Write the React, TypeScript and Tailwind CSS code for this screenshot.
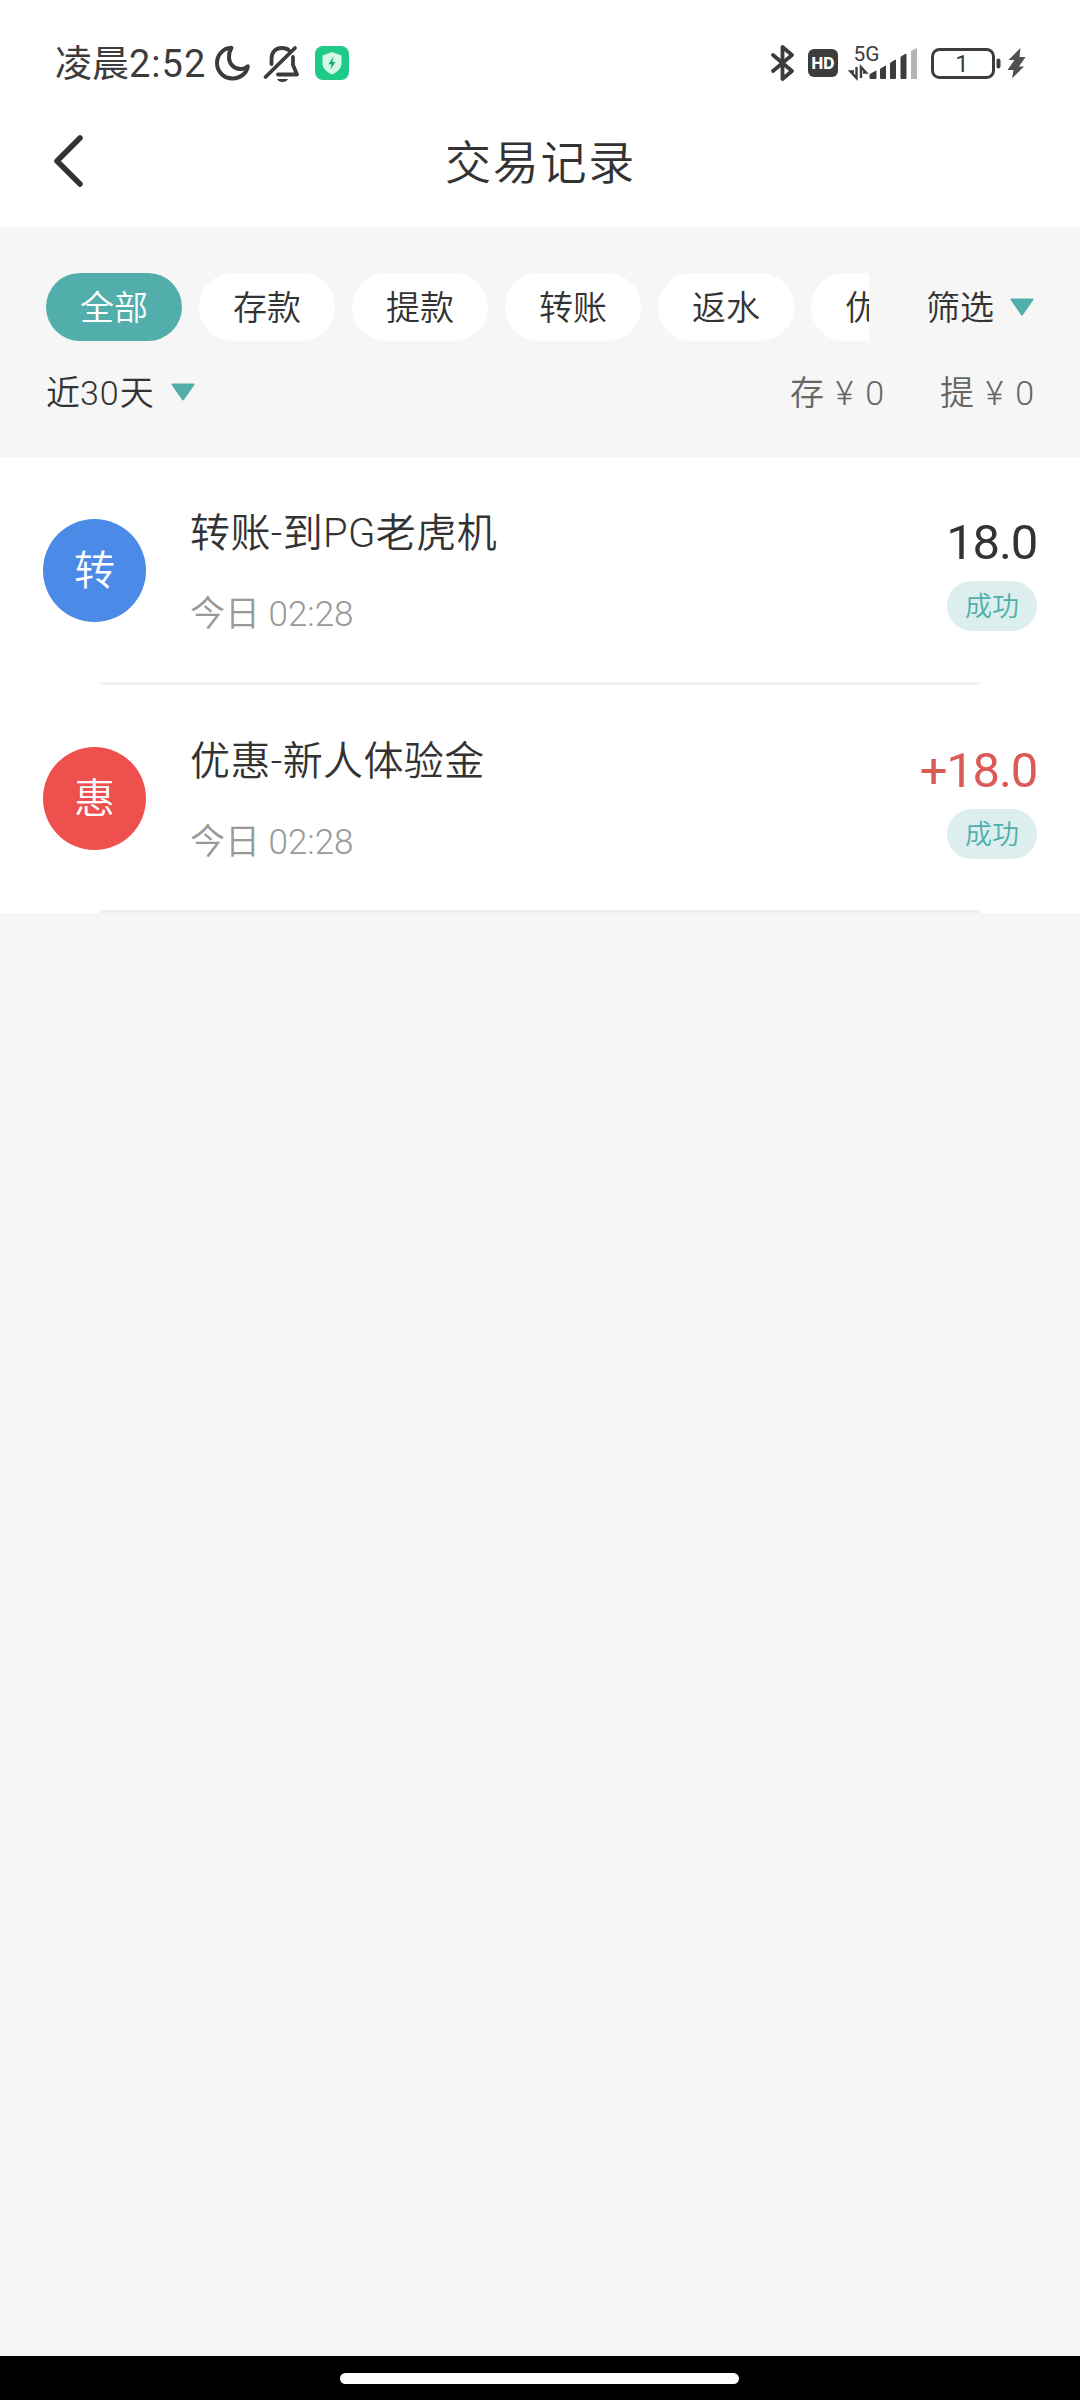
import type { ReactNode } from "react";

const tabs = ["全部", "存款", "提款", "转账", "返水", "优惠"];

const records = [
    {
        id: 1,
        icon: "转",
        iconClass: "bg-[#4b8ae6]",
        title: "转账-到PG老虎机",
        time: "今日 02:28",
        amount: "18.0",
        amountClass: "text-[#333333]",
        status: "成功",
    },
    {
        id: 2,
        icon: "惠",
        iconClass: "bg-[#ee514d]",
        title: "优惠-新人体验金",
        time: "今日 02:28",
        amount: "+18.0",
        amountClass: "text-[#dc5a56]",
        status: "成功",
    },
];

function StatusBar() {
    return (
        <div className="flex h-[126px] items-center justify-between pr-[54px] pl-[55px] text-[#3c3c3c]">
            <div className="flex items-center">
                <span className="w-[158px] pt-[2px] text-[37px] leading-none font-normal whitespace-nowrap">
                    凌晨<span className="text-[38px] tracking-[1px]">2:52</span>
                </span>
                {/* do not disturb */}
                <svg className="h-[40px] w-[40px]" viewBox="0 0 40 40" fill="none" stroke="currentColor" strokeWidth="4" strokeLinejoin="round">
                    <path d="M18.5 4.8C10.500 5 4 11.500 4 20C4 28.700 10.800 35.400 19.500 35.400C27.500 35.400 34 30 34.800 23.200C32.500 25.500 30 26.300 27 26C20.500 25.400 16 20.500 16 14.500C16 10.500 17 7 18.500 4.800Z" />
                </svg>
                {/* muted */}
                <svg className="ml-[9px] h-[40px] w-[40px]" viewBox="0 0 40 40" fill="none" stroke="currentColor" strokeWidth="3.8" strokeLinecap="round" strokeLinejoin="round">
                    <path d="M9.500 21V16C9.500 9 13.500 5 20 5C23 5 25.300 5.800 27 7.300M31 14V22L35 31.500H16" />
                    <path d="M3.500 34L33 5" />
                    <path d="M15 36H26C25 38 23 39 20.500 39C18 39 16 38 15 36Z" fill="currentColor" stroke="none" />
                </svg>
                {/* security */}
                <svg className="ml-[13px] h-[34px] w-[34px]" viewBox="0 0 34 34">
                    <rect width="34" height="34" rx="8" fill="#1dcb86" />
                    <path d="M17 6L26.500 9.500V17C26.500 22 23 26 17 28.500C11 26 7.500 22 7.500 17V9.500Z" fill="#d5f8ea" />
                    <path d="M18.500 10.500L13.500 18.300H16.500L15.500 23.500L20.500 16H17.500Z" fill="#1aa874" />
                </svg>
            </div>

            <svg className="h-[40px] w-[256px]" viewBox="0 0 256 40" fill="none">
                {/* bluetooth */}
                <path d="M3 12L22 28L12.500 36V4L22 12L3 28" stroke="currentColor" strokeWidth="3.800" strokeLinejoin="round" strokeLinecap="round" />
                {/* HD voice */}
                <rect x="38" y="6" width="30" height="28" rx="6" fill="currentColor" />
                <text x="53" y="25.500" textAnchor="middle" fontSize="15.500" fontWeight="800" fill="#fff" className="font-[Inter]">HD</text>
                {/* mobile signal */}
                <text x="83.500" y="18" fontSize="21" fontWeight="400" fill="currentColor" textLength="26" lengthAdjust="spacingAndGlyphs" className="font-[Roboto]">5G</text>
                <path d="M86.500 24V35L80.500 28.500H84M91 35V24L96 29.500H93" stroke="currentColor" strokeWidth="2.400" />
                <path d="M100 31.500L106 28V35.500H100ZM110.500 26L115.500 23V35.500H110.500ZM120.500 20L125.500 17V35.500H120.500ZM131 14L136 11V35.500H131Z" fill="currentColor" stroke="currentColor" strokeLinejoin="round" />
                <path d="M141 8L147 5V36H141Z" fill="#b5b5b5" />
                {/* battery */}
                <rect x="162.500" y="6.500" width="61" height="28" rx="7" stroke="currentColor" strokeWidth="3" />
                <rect x="226.500" y="15.500" width="4" height="10" rx="2" fill="currentColor" />
                <text x="192" y="29" textAnchor="middle" fontSize="24" fontWeight="400" fill="currentColor" className="font-[Roboto]">1</text>
                <path d="M250.500 5L238.500 17H244.500L237.500 27H243.500L242 35.500L254 23.500H249L255.500 14H249.500Z" fill="#505050" />
            </svg>
        </div>
    );
}

function Caret({ className }: { className?: string }) {
    return (
        <svg className={`h-[18px] w-[24px] ${className ?? ""}`} viewBox="0 0 24 18">
            <path d="M1.500 1.500H22.500L12 16.500Z" fill="#51aeab" stroke="#51aeab" strokeWidth="2" strokeLinejoin="round" />
        </svg>
    );
}

function Header({ children }: { children: ReactNode }) {
    return (
        <div className="grid h-[101px] grid-cols-[1fr_auto_1fr] items-start px-[53px]">
            <svg className="mt-[8px] h-[54px] w-[32px]" viewBox="0 0 32 54" fill="none">
                <path d="M27 4L4 27L27 50" stroke="#333" strokeWidth="5.500" strokeLinecap="round" strokeLinejoin="round" />
            </svg>
            <h1 className="pt-[13px] pl-[1px] text-[46px] leading-[48px] tracking-[1.8px]">{children}</h1>
        </div>
    );
}

export default function App() {
    return (
        <div className="flex h-[2400px] w-[1080px] flex-col overflow-hidden bg-[#f6f6f6] font-['Roboto','Noto_Sans_CJK_SC',sans-serif] font-[350] text-[#333333]">
            <div className="bg-white">
                <StatusBar />
                <Header>交易记录</Header>
            </div>

            {/* filters */}
            <div className="h-[230px] pt-[46px] pr-[46px] pl-[46px] text-[34px]">
                <div className="flex items-center">
                    <div className="flex w-[823px] shrink-0 gap-[17px] overflow-hidden">
                        {tabs.map((tab, i) => (
                            <button
                                key={tab}
                                className={`h-[68px] w-[136px] shrink-0 rounded-full pt-[2px] leading-none ${i === 0 ? "bg-[#51aeab] text-white" : "bg-white"}`}
                            >
                                {tab}
                            </button>
                        ))}
                    </div>
                    <span className="ml-[57px] pt-[2px] leading-none whitespace-nowrap">筛选</span>
                    <Caret className="ml-auto" />
                </div>
                <div className="mt-[26px] flex h-[50px] items-center leading-none">
                    <span className="pt-[2px]">
                        近<span className="tracking-[1px]">30</span>天
                    </span>
                    <Caret className="ml-[17px]" />
                    <div className="ml-auto flex gap-[56px] pt-[2px] text-[#666666] [word-spacing:3.5px]">
                        <span>存 ¥ 0</span>
                        <span>提 ¥ 0</span>
                    </div>
                </div>
            </div>

            {/* records */}
            <ul className="bg-white">
                {records.map((r) => (
                    <li key={r.id} className="flex h-[228px] flex-col">
                        <div className="flex flex-1 items-start pr-[43px] pl-[43px]">
                            <div className={`mt-[62px] flex size-[103px] items-center justify-center rounded-full pt-[2px] text-[41px] leading-none text-white ${r.iconClass}`}>
                                {r.icon}
                            </div>
                            <div className="ml-[44px] flex-1 pt-[52px]">
                                <p className="text-[40px] leading-[50px] tracking-[0.4px]">{r.title}</p>
                                <p className="mt-[31px] text-[35px] leading-[50px] text-[#999999]">{r.time}</p>
                            </div>
                            <div className="flex flex-col items-end pt-[57px]">
                                <span className={`text-[49px] leading-[58px] font-normal tracking-[-1.2px] ${r.amountClass}`}>{r.amount}</span>
                                <span className="mt-[9px] flex h-[50px] w-[90px] items-center justify-center rounded-full bg-[#dceeed] pt-[2px] text-[27px] leading-none text-[#51aeab]">
                                    {r.status}
                                </span>
                            </div>
                        </div>
                        <div className="mx-[100px] h-[3px] bg-[#f0f0f0]" />
                    </li>
                ))}
            </ul>

            {/* gesture bar */}
            <div className="mt-auto flex h-[44px] bg-black pt-[17px] pl-[340px]">
                <div className="h-[11px] w-[399px] rounded-full bg-white" />
            </div>
        </div>
    );
}
